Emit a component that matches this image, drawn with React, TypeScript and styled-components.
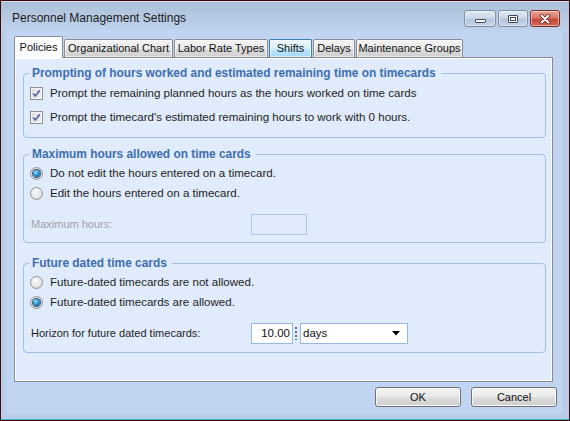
import styled, { createGlobalStyle } from "styled-components";

const GlobalStyle = createGlobalStyle`
  html, body {
    margin: 0;
    padding: 0;
    background: #ffffff;
  }
  body {
    font-family: "Liberation Sans", Arial, sans-serif;
    font-size: 11px;
    color: #1e1e1e;
  }
  * { box-sizing: border-box; }
`;

const tabs = [
  { label: "Policies", w: 49, active: true },
  { label: "Organizational Chart", w: 109 },
  { label: "Labor Rate Types", w: 94 },
  { label: "Shifts", w: 43, hover: true },
  { label: "Delays", w: 42 },
  { label: "Maintenance Groups", w: 107 },
];

const Check = () => (
  <CheckBox>
    <svg width="9" height="9" viewBox="0 0 9 9">
      <path d="M1.2 4.6 L3.4 7 L7.8 1.4" fill="none" stroke="#56689a" strokeWidth="1.7" />
    </svg>
  </CheckBox>
);

export default function App() {
  return (
    <>
      <GlobalStyle />
      <Window>
        <TitleBar>
          <Title>Personnel Management Settings</Title>
          <Controls>
            <CtrlButton $w={32}>
              <MinGlyph />
            </CtrlButton>
            <CtrlButton $w={30}>
              <MaxGlyph />
            </CtrlButton>
            <CtrlButton $w={30} $close>
              <svg width="14" height="10" viewBox="0 0 14 10">
                <path d="M3.5 1.5 L10.5 8.5 M10.5 1.5 L3.5 8.5" stroke="#6b2219" strokeWidth="3.6" strokeLinecap="round" />
                <path d="M3.5 1.5 L10.5 8.5 M10.5 1.5 L3.5 8.5" stroke="#ffffff" strokeWidth="2" strokeLinecap="round" />
              </svg>
            </CtrlButton>
          </Controls>
        </TitleBar>

        <Client>
          <TabStrip>
            {tabs.map((t) => (
              <Tab key={t.label} $w={t.w} $active={!!t.active} $hover={!!t.hover}>
                {t.label}
              </Tab>
            ))}
          </TabStrip>

          <Panel>
            <Group $top={3} $bottom={10}>
              <Legend>Prompting of hours worked and estimated remaining time on timecards</Legend>
              <Rows $gap={4}>
                <Row>
                  <Check />
                  <span>Prompt the remaining planned hours as the hours worked on time cards</span>
                </Row>
                <Row>
                  <Check />
                  <span>Prompt the timecard's estimated remaining hours to work with 0 hours.</span>
                </Row>
              </Rows>
            </Group>

            <Group $top={2} $bottom={7} $mt={9}>
              <Legend>Maximum hours allowed on time cards</Legend>
              <Rows $gap={0}>
                <Row>
                  <Radio $on />
                  <span>Do not edit the hours entered on a timecard.</span>
                </Row>
                <Row>
                  <Radio />
                  <span>Edit the hours entered on a timecard.</span>
                </Row>
                <FieldRow>
                  <FieldLabel $disabled>Maximum hours:</FieldLabel>
                  <TextBox $w={56} $disabled />
                </FieldRow>
              </Rows>
            </Group>

            <Group $top={2} $bottom={8} $mt={13}>
              <Legend>Future dated time cards</Legend>
              <Rows $gap={0}>
                <Row>
                  <Radio />
                  <span>Future-dated timecards are not allowed.</span>
                </Row>
                <Row>
                  <Radio $on />
                  <span>Future-dated timecards are allowed.</span>
                </Row>
                <FieldRow>
                  <FieldLabel>Horizon for future dated timecards:</FieldLabel>
                  <TextBox $w={42}>10.00</TextBox>
                  <Spin />
                  <Select>
                    <span>days</span>
                    <svg width="8" height="5" viewBox="0 0 8 5">
                      <path d="M0 0 H8 L4 4.5 Z" fill="#000000" />
                    </svg>
                  </Select>
                </FieldRow>
              </Rows>
            </Group>
          </Panel>

          <Footer>
            <Button>OK</Button>
            <Button>Cancel</Button>
          </Footer>
        </Client>
      </Window>
    </>
  );
}

const Window = styled.div`
  width: 570px;
  height: 421px;
  display: flex;
  flex-direction: column;
  background: #b8cde8;
  border: 1px solid #3d0808;
  box-shadow: inset 0 -1px 0 #3cb4c8;
`;

const TitleBar = styled.div`
  height: 29px;
  display: flex;
  align-items: flex-start;
  padding: 0 9px 0 11px;
  background: linear-gradient(#a9bdd7 0%, #b4c8e2 45%, #bdd1ec 100%);
  box-shadow: inset 0 1px 0 #d6e2f0;
`;

const Title = styled.div`
  font-family: "Liberation Sans", Arial, sans-serif;
  font-size: 12px;
  color: #1b1b1b;
  line-height: 14px;
  margin-top: 10px;
`;

const Controls = styled.div`
  display: flex;
  gap: 2px;
  margin-left: auto;
  margin-top: 9px;
`;

const CtrlButton = styled.div<{ $w: number; $close?: boolean }>`
  width: ${(p) => p.$w}px;
  height: 17px;
  display: flex;
  align-items: center;
  justify-content: center;
  border-radius: 3px;
  border: 1px solid ${(p) => (p.$close ? "#7e2a21" : "#7d8ea6")};
  background: ${(p) =>
    p.$close
      ? "linear-gradient(#e9a497 0%, #d7776a 45%, #c5483a 55%, #d36a55 100%)"
      : "linear-gradient(#e1e9f4 0%, #cbd8e8 45%, #b5c6dc 55%, #c5d4e6 100%)"};
  box-shadow: inset 0 0 0 1px rgba(255, 255, 255, 0.45);
`;

const MinGlyph = styled.span`
  width: 11px;
  height: 4px;
  margin-top: 5px;
  background: #ffffff;
  border: 1px solid #3f4c5e;
  border-radius: 1px;
`;

const MaxGlyph = styled.span`
  width: 10px;
  height: 8px;
  background: #ffffff;
  border: 1px solid #3f4c5e;
  box-shadow: inset 0 0 0 1px #ffffff, inset 0 0 0 2px #3f4c5e;
  border-radius: 1px;
`;

const Client = styled.div`
  flex: 1;
  display: flex;
  flex-direction: column;
  margin: 0 7px 6px 6px;
  padding: 6px 5px 0 7px;
  background: #c1d5f3;
`;

const TabStrip = styled.div`
  display: flex;
  align-items: flex-end;
  gap: 1px;
  height: 22px;
  margin-bottom: -1px;
  position: relative;
  z-index: 1;
`;

const Tab = styled.div<{ $w: number; $active: boolean; $hover: boolean }>`
  width: ${(p) => p.$w}px;
  height: ${(p) => (p.$active ? 22 : 19)}px;
  display: flex;
  align-items: center;
  justify-content: center;
  font-size: 11px;
  color: #111111;
  white-space: nowrap;
  padding-bottom: ${(p) => (p.$active ? 2 : 1)}px;
  border: 1px solid ${(p) => (p.$hover ? "#3c7fb1" : "#898c95")};
  border-bottom: ${(p) => (p.$active ? "none" : "1px solid #898c95")};
  border-radius: 2px 2px 0 0;
  background: ${(p) =>
    p.$active
      ? "#fcfdff"
      : p.$hover
      ? "linear-gradient(#eaf6fd 0%, #d9f0fc 50%, #bee6fd 51%, #a7d9f5 100%)"
      : "linear-gradient(#f2f2f2 0%, #ebebeb 50%, #dddddd 51%, #cfcfcf 100%)"};
  box-shadow: inset 0 0 0 1px rgba(255, 255, 255, 0.6);
`;

const Panel = styled.div`
  flex: 1;
  margin-right: 4px;
  padding: 8px 6px 0 8px;
  display: flex;
  flex-direction: column;
  background: #e0ebfb;
  border: 1px solid #898c95;
  box-shadow: inset 0 0 0 1px #ffffff;
`;

const Group = styled.fieldset<{ $top: number; $bottom: number; $mt?: number }>`
  margin: ${(p) => p.$mt ?? 0}px 0 0 0;
  padding: ${(p) => p.$top}px 0 ${(p) => p.$bottom}px 5px;
  border: 1px solid #a3bfe3;
  border-radius: 4px;
  min-width: 0;
`;

const Legend = styled.legend`
  margin-left: 0;
  padding: 0 5px 0 3px;
  font-weight: bold;
  font-size: 11.9px;
  line-height: 14px;
  color: #3d6eb0;
  white-space: nowrap;
`;

const Rows = styled.div<{ $gap: number }>`
  display: flex;
  flex-direction: column;
  gap: ${(p) => p.$gap}px;
`;

const Row = styled.div`
  height: 20px;
  display: flex;
  align-items: center;
  gap: 7px;
  white-space: nowrap;
  font-size: 11.55px;
`;

const CheckBox = styled.span`
  width: 13px;
  height: 13px;
  margin-left: 1px;
  display: flex;
  align-items: center;
  justify-content: center;
  border: 1px solid #8e8f8f;
  background: linear-gradient(135deg, #d8dbe0 0%, #f4f4f6 100%);
  box-shadow: inset 0 0 0 1px #f4f4f4;
`;

const Radio = styled.span<{ $on?: boolean }>`
  width: 13px;
  height: 13px;
  margin-left: 1px;
  border-radius: 50%;
  display: flex;
  align-items: center;
  justify-content: center;
  border: 1px solid #939393;
  background: radial-gradient(circle at 40% 35%, #fbfbfb 0%, #e6e6e6 55%, #cfcfcf 100%);
  &::after {
    content: "";
    display: ${(p) => (p.$on ? "block" : "none")};
    width: 7px;
    height: 7px;
    border-radius: 50%;
    background: radial-gradient(circle at 40% 35%, #9fe2fb 0%, #2f93cf 45%, #124f86 100%);
    box-shadow: 0 0 0 1px #2b4f74;
  }
`;

const FieldRow = styled.div`
  height: 22px;
  margin-top: 10px;
  display: flex;
  align-items: center;
  white-space: nowrap;
`;

const FieldLabel = styled.span<{ $disabled?: boolean }>`
  width: 220px;
  margin-left: 2px;
  font-size: 11px;
  color: ${(p) => (p.$disabled ? "#a1a3a6" : "#1e1e1e")};
`;

const TextBox = styled.div<{ $w: number; $disabled?: boolean }>`
  width: ${(p) => p.$w}px;
  height: 21px;
  display: flex;
  align-items: center;
  justify-content: flex-end;
  padding: 0 2px 0 3px;
  border: 1px solid ${(p) => (p.$disabled ? "#aac6ea" : "#98b8e4")};
  background: ${(p) => (p.$disabled ? "#e0ebfb" : "#ffffff")};
  font-size: 11.5px;
  color: #111111;
`;

const Spin = styled.span`
  width: 2px;
  height: 13px;
  margin: 0 3px 0 2px;
  background: repeating-linear-gradient(#6c6c6c 0 2px, transparent 2px 4px);
`;

const Select = styled.div`
  width: 108px;
  height: 21px;
  display: flex;
  align-items: center;
  justify-content: space-between;
  padding: 0 7px 0 2px;
  border: 1px solid #98b8e4;
  background: #ffffff;
  font-size: 11.5px;
  color: #111111;
`;

const Footer = styled.div`
  display: flex;
  justify-content: flex-end;
  gap: 10px;
  margin: 5px 0 7px;
`;

const Button = styled.div`
  width: 86px;
  height: 20px;
  display: flex;
  align-items: center;
  justify-content: center;
  font-size: 11px;
  color: #111111;
  border: 1px solid #707070;
  border-radius: 3px;
  background: linear-gradient(#f2f2f2 0%, #ebebeb 50%, #dddddd 51%, #cfcfcf 100%);
  box-shadow: inset 0 0 0 1px #fbfbfb;
`;
